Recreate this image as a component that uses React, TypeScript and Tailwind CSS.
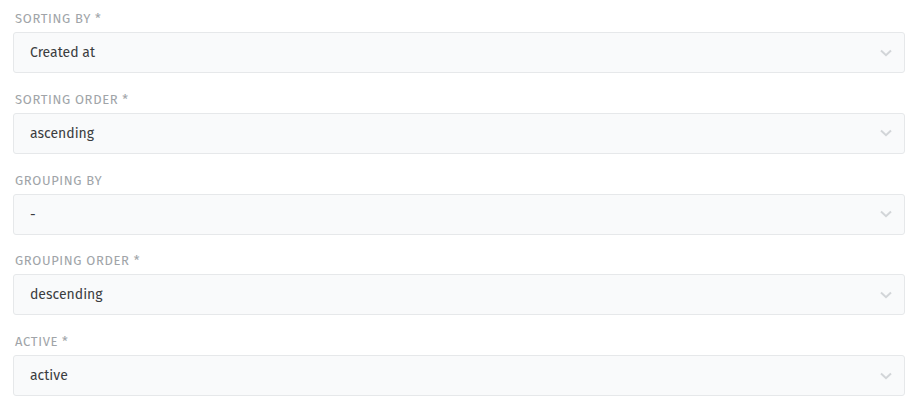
const fields = [
  { label: "Sorting by", required: true, value: "Created at" },
  { label: "Sorting order", required: true, value: "ascending" },
  { label: "Grouping by", required: false, value: "-" },
  { label: "Grouping order", required: true, value: "descending" },
  { label: "Active", required: true, value: "active" },
];

function Chevron() {
  return (
    <svg width="12" height="8" viewBox="0 0 12 8" fill="none" className="text-[#d2d5d8]">
      <path d="M1 1.5 6 6.2l5-4.7" stroke="currentColor" strokeWidth="2" />
    </svg>
  );
}

function SelectField({ label, required, value }: { label: string; required: boolean; value: string }) {
  return (
    <div className="flex flex-col gap-[5px]">
      <div className="pl-[2px] text-[13px] leading-4 uppercase tracking-[0.05em] text-[#a0a4a8]">
        {label}
        {required && <span className="ml-1">*</span>}
      </div>
      <div className="h-[41px] flex items-center justify-between rounded-[3px] border border-[#e6e8ea] bg-[#f9fafb] pl-4 pr-3">
        <span className="text-[14px] text-[#3b3d3f]">{value}</span>
        <Chevron />
      </div>
    </div>
  );
}

export default function App() {
  return (
    <div
      className="min-h-screen bg-white pl-[13px] pr-[15px] pt-[11px] flex flex-col gap-[18.75px]"
      style={{ fontFamily: '"Fira Sans", "Noto Sans", "Open Sans", sans-serif' }}
    >
      {fields.map((f) => (
        <SelectField key={f.label} {...f} />
      ))}
    </div>
  );
}
